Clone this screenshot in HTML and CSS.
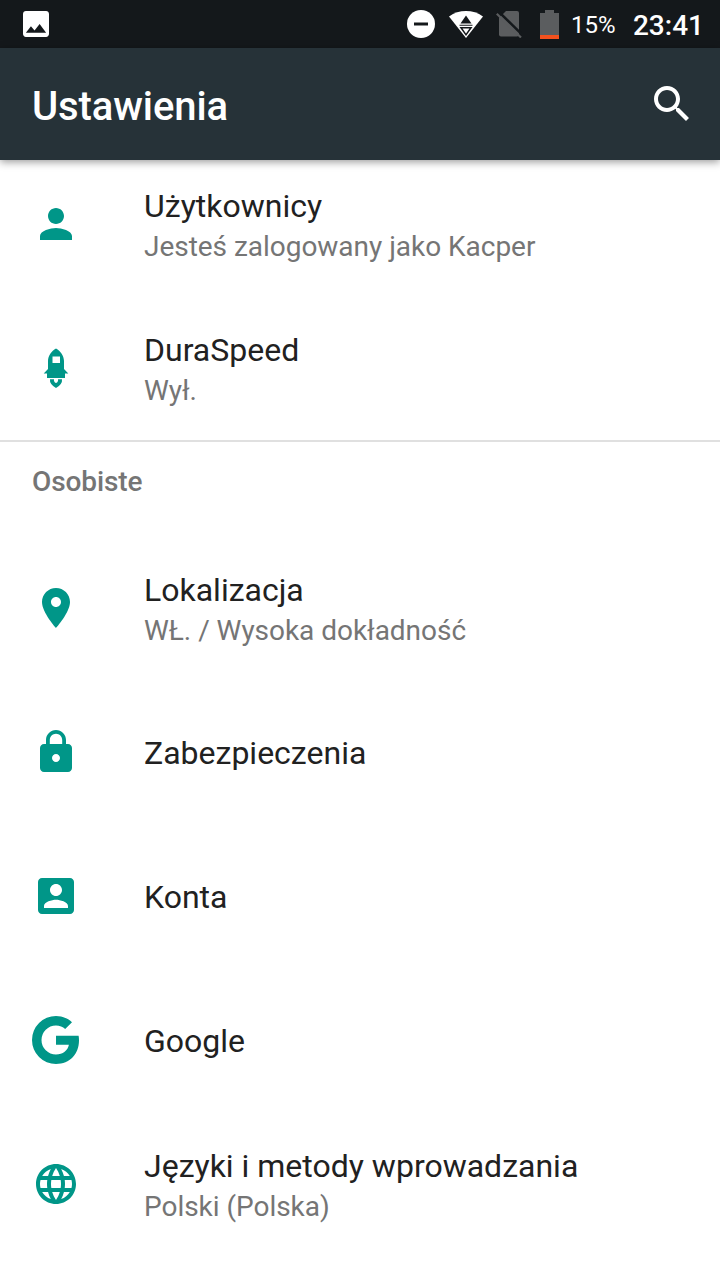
FILE: index.html
```html
<!DOCTYPE html>
<html lang="pl">

<head>
    <meta charset="UTF-8">
    <title>Ustawienia</title>
    <link rel="stylesheet" href="styles.css">
</head>

<body>
    <div class="status-bar">
        <svg class="status-image" viewBox="3 3 18 18">
            <path d="M21 19V5c0-1.100-.9-2-2-2H5c-1.100 0-2 .9-2 2v14c0 1.100.9 2 2 2h14c1.100 0 2-.9 2-2zM8.500 13.500l2.500 3.010L14.500 12l4.500 6H5l3.500-4.500z"/>
        </svg>
        <div class="status-icons">
            <svg class="dnd" viewBox="0 0 28 28">
                <circle cx="14" cy="14" r="14"/>
                <path class="cut" d="M7 12.500h14v3H7z"/>
            </svg>
            <svg class="wifi" viewBox="0 0 34 27">
                <path d="M0 5.500C10-1.800 24-1.800 34 5.500L17 27z"/>
                <path class="cut" d="M17 4.500l5.500 8h-11zM10.500 13.700h13v1h-13zM10.500 16h13L17 25z"/>
                <path d="M13.500 17.500h7L17 22.500z"/>
            </svg>
            <svg class="sim" viewBox="0 0 26 28">
                <path d="M10 1h11q2 0 2 2v21.500q0 2-2 2H5q-2 0-2-2V8z"/>
                <path class="gap" d="M1.500 .5l26 25.500"/>
                <path class="slash" d="M.8 3.800L25 27.500"/>
            </svg>
            <svg class="battery" viewBox="0 0 19 29">
                <path d="M5 0h9v3h5v22H0V3h5z"/>
                <path class="level" d="M0 25h19v4H0z"/>
            </svg>
            <span class="percent">15%</span>
            <span class="clock">23:41</span>
        </div>
    </div>

    <div class="app-bar">
        <h1>Ustawienia</h1>
        <svg class="icon" viewBox="0 0 24 24">
            <path d="M15.500 14h-.79l-.28-.27C15.410 12.590 16 11.110 16 9.500 16 5.910 13.090 3 9.500 3S3 5.910 3 9.500 5.910 16 9.500 16c1.610 0 3.090-.59 4.230-1.570l.27.28v.79l5 4.990L20.490 19l-4.990-5zm-6 0C7.010 14 5 11.990 5 9.500S7.010 5 9.500 5 14 7.010 14 9.500 11.990 14 9.500 14z"/>
        </svg>
    </div>

    <div class="content">
        <div class="section first">
            <div class="item">
                <svg class="icon" viewBox="0 0 24 24">
                    <path d="M12 12c2.210 0 4-1.790 4-4s-1.790-4-4-4-4 1.790-4 4 1.790 4 4 4zm0 2c-2.670 0-8 1.340-8 4v2h16v-2c0-2.660-5.330-4-8-4z"/>
                </svg>
                <div class="text">
                    <div class="title">Użytkownicy</div>
                    <div class="summary">Jesteś zalogowany jako Kacper</div>
                </div>
            </div>
            <div class="item">
                <svg class="icon" viewBox="0 0 48 48">
                    <path fill-rule="evenodd" d="M24 4.500c4.500 2.500 8 7.500 8 12.500v8l4.300 4.500H33V34H15v-4.500h-3.300L16 25v-8c0-5 3.500-10 8-12.500zM20.500 12.500v6.500h7.500v-6.500z"/>
                    <path d="M18 35.200h4q-.5 2.800 2 3.800 2.500-1 2-3.800h4q.7 4.800-6 8.800-6.700-4-6-8.800z"/>
                </svg>
                <div class="text">
                    <div class="title">DuraSpeed</div>
                    <div class="summary">Wył.</div>
                </div>
            </div>
        </div>

        <div class="section">
            <h2>Osobiste</h2>
            <div class="item">
                <svg class="icon" viewBox="0 0 24 24">
                    <path d="M12 2C8.130 2 5 5.130 5 9c0 5.250 7 13 7 13s7-7.750 7-13c0-3.870-3.130-7-7-7zm0 9.500c-1.380 0-2.500-1.120-2.500-2.500s1.120-2.500 2.500-2.500 2.500 1.120 2.500 2.500-1.120 2.500-2.500 2.500z"/>
                </svg>
                <div class="text">
                    <div class="title">Lokalizacja</div>
                    <div class="summary">WŁ. / Wysoka dokładność</div>
                </div>
            </div>
            <div class="item">
                <svg class="icon" viewBox="0 0 24 24">
                    <path d="M18 8h-1V6c0-2.760-2.240-5-5-5S7 3.240 7 6v2H6c-1.100 0-2 .9-2 2v10c0 1.100.9 2 2 2h12c1.100 0 2-.9 2-2V10c0-1.100-.9-2-2-2zm-6 9c-1.100 0-2-.9-2-2s.9-2 2-2 2 .9 2 2-.9 2-2 2zm3.100-9H8.900V6c0-1.710 1.390-3.100 3.100-3.100 1.710 0 3.100 1.390 3.100 3.100v2z"/>
                </svg>
                <div class="text">
                    <div class="title">Zabezpieczenia</div>
                </div>
            </div>
            <div class="item">
                <svg class="icon" viewBox="0 0 24 24">
                    <path d="M3 5v14c0 1.100.89 2 2 2h14c1.100 0 2-.9 2-2V5c0-1.100-.9-2-2-2H5c-1.110 0-2 .9-2 2zm12 4c0 1.660-1.340 3-3 3s-3-1.340-3-3 1.340-3 3-3 3 1.340 3 3zm-9 8c0-2 4-3.100 6-3.100s6 1.100 6 3.100v1H6v-1z"/>
                </svg>
                <div class="text">
                    <div class="title">Konta</div>
                </div>
            </div>
            <div class="item">
                <svg class="icon" viewBox="0 0 48 48">
                    <path d="M24 19.700h22.600q.4 2.200.4 4.600C47 38 38 48 24 48A24 24 0 0 1 24 0c6.300 0 11.800 2.300 16 6.200L33.200 13C30.800 10.700 27.700 9.500 24 9.500a14.500 14.500 0 0 0 0 29c7 0 11.800-4 12.900-9.700H24z"/>
                </svg>
                <div class="text">
                    <div class="title">Google</div>
                </div>
            </div>
            <div class="item">
                <svg class="icon" viewBox="0 0 24 24">
                    <path d="M11.990 2C6.470 2 2 6.480 2 12s4.470 10 9.990 10C17.520 22 22 17.520 22 12S17.520 2 11.990 2zm6.930 6h-2.950c-.32-1.250-.78-2.450-1.380-3.560 1.840.63 3.370 1.910 4.330 3.560zM12 4.040c.83 1.200 1.480 2.530 1.910 3.960h-3.820c.43-1.430 1.080-2.760 1.910-3.960zM4.260 14C4.100 13.360 4 12.690 4 12s.1-1.360.26-2h3.380c-.08.66-.14 1.320-.14 2 0 .68.06 1.340.14 2H4.260zm.82 2h2.950c.32 1.250.78 2.450 1.380 3.560-1.840-.63-3.370-1.900-4.330-3.560zm2.950-8H5.080c.96-1.660 2.490-2.930 4.330-3.560C8.810 5.550 8.350 6.750 8.030 8zM12 19.960c-.83-1.200-1.480-2.530-1.910-3.960h3.820c-.43 1.430-1.080 2.760-1.910 3.960zM14.340 14H9.660c-.09-.66-.16-1.320-.16-2 0-.68.07-1.350.16-2h4.680c.09.65.16 1.320.16 2 0 .68-.07 1.340-.16 2zm.25 5.560c.6-1.110 1.060-2.310 1.380-3.560h2.950c-.96 1.650-2.490 2.930-4.330 3.560zM16.360 14c.08-.66.14-1.320.14-2 0-.68-.06-1.340-.14-2h3.380c.16.64.26 1.310.26 2s-.1 1.360-.26 2h-3.380z"/>
                </svg>
                <div class="text">
                    <div class="title">Języki i metody wprowadzania</div>
                    <div class="summary">Polski (Polska)</div>
                </div>
            </div>
        </div>
    </div>
</body>

</html>
```

FILE: styles.css
```css
* {
    box-sizing: border-box;
}

body {
    margin: 0;
    height: 1280px;
    overflow: hidden;
    display: flex;
    flex-direction: column;
    background-color: #fff;
    color: #212121;
    font-family: Roboto, sans-serif;
}

svg {
    display: block;
    flex: none;
}

.status-bar {
    flex: none;
    height: 48px;
    padding: 0 16px 0 23px;
    display: flex;
    align-items: center;
    justify-content: space-between;
    background-color: #14181b;
    color: #fff;
    fill: #fff;
}

.status-image {
    width: 26px;
    height: 26px;
}

.status-icons {
    display: flex;
    align-items: center;
}

.cut {
    fill: #14181b;
}

.dnd {
    width: 28px;
    height: 28px;
    margin-right: 14px;
}

.wifi {
    width: 34px;
    height: 27px;
    margin-right: 13px;
}

.sim {
    width: 26px;
    height: 28px;
    margin-right: 18px;
    fill: #5b5d5f;
}

.gap {
    stroke: #14181b;
    stroke-width: 2.5;
}

.slash {
    stroke: #5b5d5f;
    stroke-width: 2.2;
}

.battery {
    width: 19px;
    height: 29px;
    margin-right: 12px;
    fill: #5b5d5f;
}

.level {
    fill: #f4511e;
}

.percent {
    width: 62px;
    padding-top: 2px;
    font-size: 24px;
}

.clock {
    padding-top: 2px;
    font-size: 28px;
    font-weight: 500;
}

.app-bar {
    position: relative;
    flex: none;
    height: 112px;
    padding: 0 24px 0 32px;
    display: flex;
    align-items: center;
    justify-content: space-between;
    background-color: #263238;
    color: #fff;
    fill: #fff;
    box-shadow: 0 2px 8px rgba(0, 0, 0, 0.4);
}

h1 {
    margin: 4px 0 0;
    font-size: 40px;
    font-weight: 500;
    letter-spacing: -0.1px;
}

.icon {
    width: 48px;
    height: 48px;
}

.content {
    fill: #009688;
}

.first {
    margin-top: -8px;
    border-bottom: 2px solid #e0e0e0;
}

h2 {
    height: 94px;
    margin: 0;
    padding: 20px 32px 0;
    color: #757575;
    font-size: 28px;
    line-height: 40px;
    font-weight: 500;
    letter-spacing: -0.1px;
}

.item {
    height: 144px;
    padding: 0 32px;
    display: flex;
    align-items: center;
    gap: 64px;
}

.text {
    padding-top: 2px;
}

.title {
    font-size: 32px;
    line-height: 42px;
}

.summary {
    margin-top: 2px;
    color: #757575;
    font-size: 28px;
    line-height: 36px;
    letter-spacing: -0.03px;
}
```
